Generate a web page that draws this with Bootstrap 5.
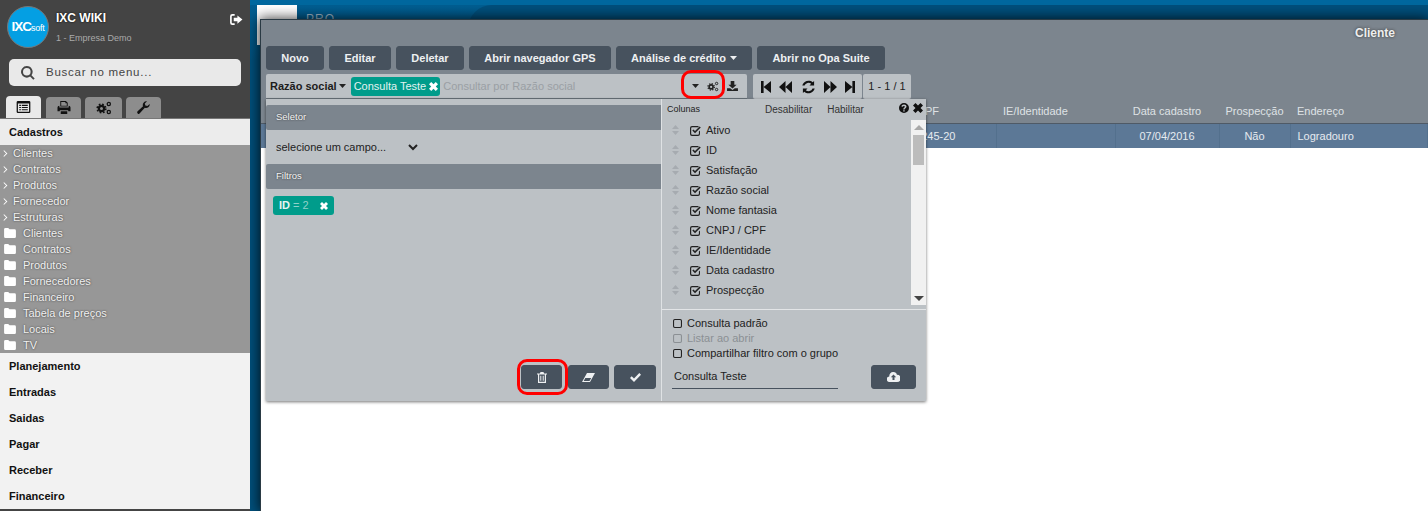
<!DOCTYPE html>
<html lang="pt-BR">
<head>
<meta charset="utf-8">
<title>IXC WIKI</title>
<link href="https://cdn.jsdelivr.net/npm/bootstrap@5.3.0/dist/css/bootstrap.min.css" rel="stylesheet">
<style>
html,body{height:511px;overflow:hidden}
body{font-family:"Liberation Sans",Arial,sans-serif;font-size:11px;background:#fff;color:#222}
.ic{display:inline-block;fill:currentColor;flex:none}
.ic-w{color:#fff}
.shell{height:511px}
.side{width:250px;flex:none;background:#444;height:511px;overflow:hidden}
.brand{height:59px;padding:6px 7px 0 7px;color:#fff}
.brand-txt{margin-left:7px}
.logo-disc{width:42px;height:42px;border-radius:50%;background:#049fe3;border:1px solid #777;color:#fff;font-weight:700;font-size:13.5px;letter-spacing:-1px;line-height:40px;text-align:center;flex:none}
.logo-disc span{font-size:9px;font-weight:400;letter-spacing:-.3px}
.brand-name{font-weight:700;font-size:12px;line-height:14px;margin-top:5px;text-shadow:0 0 2px #000}
.brand-sub{font-size:9px;color:#aaa;line-height:12px;margin-top:7px}
.search-box{margin:0 9px;height:27px;background:#e9e9e9;border-radius:5px;color:#444;font-size:11.5px;letter-spacing:.75px;padding-left:12px;gap:11px}
.side-tabs{margin:11px 0 0 6px;height:21px;gap:4px}
.side-tab{width:35px;height:21px;background:#8d8d8d;border-radius:4px 4px 0 0;color:#111}
.side-tab.on{background:#e9e9e9;height:22px;margin-top:-1px;margin-right:1px}
.side-tab.wide{width:37px}
.side-rule{height:1px;background:#777}
.menu-head{height:26px;background:#ececec;color:#111;font-weight:700;font-size:11px;padding-left:9px;line-height:26px}
.menu-alt{background:#f2f2f2}
.menu-list{background:#979797;height:208px;color:#f1f1f1;text-shadow:0 0 2px #333;padding-top:0}
.menu-list div{height:16px;line-height:16px;display:flex;align-items:center;padding-left:3px}
.menu-list .folder{padding-left:4px}
.menu-list .ic{color:#fff}
.t1{margin-left:5px}.t2{margin-left:7px}
.desk{flex:1;position:relative;height:511px;padding:19px 0 0 10px;background:linear-gradient(#00689f 0,#00689f 5px,#005e92 5px,#00507c 60px);overflow:hidden}
.behind-logo{position:absolute;left:7px;top:5px;width:40px;height:40px;background:#fff}
.behind-pro{position:absolute;left:56px;top:13px;color:#9db6c8;font-size:12px;letter-spacing:1px;line-height:12px}
.behind-wave{position:absolute;left:218px;top:5px;right:0;height:40px;border-radius:24px 0 0 0;background:#004f7c}
.win{position:relative;height:492px;background:#fff;border-top:1px solid #2a3a44;border-left:1px solid #2a3a44;box-shadow:0 0 12px 1px rgba(0,0,0,.75)}
.win-top{height:79px;background:#7c858e;position:relative}
.win-title{position:absolute;right:33px;top:7px;color:#eee;font-weight:700;font-size:12px;line-height:12px;text-shadow:0 0 3px #333}
.act-row{padding:26px 0 0 5px;gap:5px;height:50px}
.btn-ixc{--bs-btn-padding-y:0;--bs-btn-padding-x:0;--bs-btn-font-size:11px;--bs-btn-font-weight:700;--bs-btn-color:#eef0f2;--bs-btn-bg:#47525e;--bs-btn-border-color:#47525e;--bs-btn-border-radius:3px;--bs-btn-hover-bg:#47525e;--bs-btn-hover-color:#eef0f2;--bs-btn-hover-border-color:#47525e;height:24px;display:flex;align-items:center;justify-content:center}
.w58{width:58px}.w62{width:62px}.w68{width:68px}.w142{width:142px}.w136{width:136px;gap:4px}.w128{width:128px}.w41{width:41px}.w42{width:42px}.w45{width:45px}
.tool-row{padding:4px 0 0 5px;height:29px;gap:6px}
.find-bar{width:481px;height:25px;background:#bcc1c5;border-radius:2px 2px 0 0;padding-left:4px;border-bottom:1px solid #6b747c;color:#222}
.find-label{font-weight:700;font-size:11px;color:#1c1c1c;margin-right:2px}
.chip{background:#009c8b;color:#e2f3f1;border-radius:3px;height:19px;padding:0 2px 0 3px;font-size:11px;line-height:19px;gap:3px;margin-left:1px}
.find-hint{color:#9a9fa4;font-size:11px;margin-left:3px}
.find-tools{gap:8px;padding-right:9px;color:#222}
.pager{height:25px;background:#bcc1c5;width:109px;border-radius:2px;padding:0 7px 0 8px;color:#111;justify-content:space-between}
.pager-count{height:25px;background:#bcc1c5;width:48px;margin-left:-5px;border-radius:2px;text-align:center;line-height:25px;color:#222;font-size:11px}
.grid-tbl{table-layout:fixed;width:1167px;margin:0;border-collapse:collapse}
.grid-tbl th{height:24px;background:#7c858e;color:#dfe2e5;font-weight:400;font-size:11px;padding:0;border-bottom:1px solid #4f5a66;vertical-align:middle;line-height:18px}
.grid-tbl td{height:25px;background:#5c7896;color:#e6ebf0;font-size:11px;padding:0;border-right:1px solid #53708d;border-bottom:0;vertical-align:middle}
.c1{width:735px}.c2{width:119px}.c3{width:104px}.c4{width:71px}
.grid-tbl .pl7{padding-left:7px}
.grid-tbl .hcpf{padding-right:57px}
.grid-tbl .dcpf{padding-right:40px}
.drop{position:absolute;left:5px;top:79px;width:660px;height:302px;background:#bcc1c5;box-shadow:0 1px 3px rgba(0,0,0,.55)}
.drop-left{width:396px;padding-top:6px;border-right:1px solid #dfe2e4;position:relative}
.bar-head{height:25px;background:#7c858e;color:#f4f4f4;font-size:9.5px;line-height:24px;padding-left:10px;text-shadow:0 0 2px #333;border-radius:2px 0 0 2px}
.field-row{height:34px;padding-left:6px}
.field-row select{border:0;background:transparent;font-family:inherit;font-size:11px;color:#222;width:149px;outline:0}
.id-chip{display:inline-flex;align-items:center;margin:7px 0 0 7px;width:61px;height:19px;background:#009c8b;color:#e6f5f3;border-radius:3px;padding:0 6px;font-size:11px;justify-content:space-between}
.id-chip b{font-weight:700}
.id-chip em{font-style:normal;color:#8fd1c9}
.drop-acts{position:absolute;left:255px;bottom:12px}
.drop-acts .btn+.btn{margin-left:6px}
.drop-acts .btn+.btn+.btn{margin-left:5px}
.drop-right{flex:1;position:relative}
.col-head{height:21px;padding:0 0 0 5px;font-size:10px;color:#222}
.col-head .cols{font-size:9px;width:98px}
.col-head .lnk{font-size:10px;color:#333;margin-right:15px}
.col-x{position:absolute;right:3px;top:4px;gap:4px;color:#111}
.col-wrap{height:185px}
.col-list{flex:1;padding-top:0}
.col-item{height:20px;display:flex;align-items:center;font-size:11px;color:#222;padding-left:10px}
.col-item .grip{color:#a6abb0;margin-right:11px}
.col-item .chk{margin-right:5px;color:#222}
.sbar{width:15px;height:185px;background:#f1f1f1;position:relative;flex:none}
.sbar i{position:absolute;left:2px;top:15px;width:11px;height:30px;background:#bcbcbc}
.sbar u{position:absolute;left:3px;width:0;height:0;border-left:5px solid transparent;border-right:5px solid transparent}
.sbar .up{top:5px;border-bottom:5px solid #a8a8a8}
.sbar .dn{bottom:4px;border-top:5px solid #444}
.col-foot{border-top:1px solid #e3e5e7;margin-top:4px;padding:6px 0 0 11px;color:#222;font-size:11px}
.opt{height:15px;line-height:15px;display:flex;align-items:center;gap:5px}
.opt.off{color:#8b9094}
.save-row{margin-top:4px;padding-right:10px}
.save-row input{width:166px;height:24px;margin-left:-1px;border:0;border-bottom:1px solid #47525e;background:transparent;font-family:inherit;font-size:11px;color:#222;padding:0 0 2px 2px;outline:0}
.ring{position:absolute;border:3px solid #f00;border-radius:10px;pointer-events:none}
.ring-a{left:420px;top:50px;width:44px;height:29px}
.ring-b{left:256px;top:339px;width:51px;height:36px}
</style>
</head>
<body>
<svg width="0" height="0" class="position-absolute">
<defs>
<symbol id="s-list" viewBox="0 0 16 14"><path d="M1.500 0h13A1.500 1.500 0 0 1 16 1.500v11a1.500 1.500 0 0 1-1.500 1.500h-13A1.500 1.500 0 0 1 0 12.500v-11A1.500 1.500 0 0 1 1.500 0zM1.500 3v9.500h13V3zM3 4.500h2v1.300H3zM6 4.500h7v1.300H6zM3 7h2v1.300H3zM6 7h7v1.300H6zM3 9.500h2v1.300H3zM6 9.500h7v1.300H6z" fill-rule="evenodd"/></symbol>
<symbol id="s-print" viewBox="0 0 14 14"><path d="M3 0h6l2 2v4H3zM4 1v4h6V2.500H8.500V1zM0 7a2 2 0 0 1 2-2v2h10V5a2 2 0 0 1 2 2v4h-2.500v-1h-9v1H0zM3.500 11h7v3h-7z" fill-rule="evenodd"/></symbol>
<symbol id="s-cogs" viewBox="0 0 16 14"><g fill="none" stroke="currentColor"><circle cx="5.500" cy="7.500" r="2.600" stroke-width="2.200"/><circle cx="5.500" cy="7.500" r="4.300" stroke-width="1.600" stroke-dasharray="1.700 1.700"/><circle cx="12.800" cy="3" r="1.600" stroke-width="1.300"/><circle cx="12.800" cy="11" r="1.600" stroke-width="1.300"/></g></symbol>
<symbol id="s-wrench" viewBox="0 0 14 14"><path d="M13.700 3.200a4 4 0 0 1-5.300 4.200L3 13.300a1.500 1.500 0 0 1-2.300-2.200l5.800-5.400A4 4 0 0 1 10.800.3L8.400 2.700l.6 2.200 2.200.6z"/></symbol>
<symbol id="s-out" viewBox="0 0 14 12"><path d="M5 0v1.800H2.800a1 1 0 0 0-1 1v6.400a1 1 0 0 0 1 1H5V12H2.500A2.500 2.500 0 0 1 0 9.500v-7A2.500 2.500 0 0 1 2.500 0zM8 1.500 13.500 6 8 10.500V8H4V4h4z"/></symbol>
<symbol id="s-search" viewBox="0 0 14 14"><path d="M5.800 0a5.800 5.800 0 0 1 4.700 9.200l3.200 3.200-1.400 1.400-3.200-3.200A5.800 5.800 0 1 1 5.800 0zm0 2a3.800 3.800 0 1 0 0 7.600 3.800 3.800 0 0 0 0-7.600z" fill-rule="evenodd"/></symbol>
<symbol id="s-folder" viewBox="0 0 13 11"><path d="M1.500 0h3l1.500 1.500h5.500A1.500 1.500 0 0 1 13 3v6.500a1.500 1.500 0 0 1-1.500 1.500h-10A1.500 1.500 0 0 1 0 9.500v-8A1.500 1.500 0 0 1 1.500 0z"/></symbol>
<symbol id="s-angle" viewBox="0 0 6 8"><path d="M1.300 0 5.300 4l-4 4-.8-.8L3.700 4 .5.800z"/></symbol>
<symbol id="s-caret" viewBox="0 0 7 4"><path d="M0 0h7L3.500 4z"/></symbol>
<symbol id="s-x" viewBox="0 0 10 10"><path d="M2.500 0 5 2.500 7.500 0 10 2.500 7.500 5 10 7.500 7.500 10 5 7.500 2.500 10 0 7.500 2.500 5 0 2.500z"/></symbol>
<symbol id="s-dl" viewBox="0 0 12 11"><path d="M4 0h4v4h2.500L6 8.200 1.500 4H4zM0 8h3.500L6 10l2.500-2H12v3H0z"/></symbol>
<symbol id="s-first" viewBox="0 0 10 12"><path d="M0 0h2.600v12H0zM10 0v12L2.600 6z"/></symbol>
<symbol id="s-prev" viewBox="0 0 13 12"><path d="M6.500 0v12L0 6zM13 0v12L6.500 6z"/></symbol>
<symbol id="s-next" viewBox="0 0 13 12"><path d="M0 0v12l6.500-6zM6.500 0v12L13 6z"/></symbol>
<symbol id="s-last" viewBox="0 0 10 12"><path d="M10 0H7.400v12H10zM0 0v12l7.400-6z"/></symbol>
<symbol id="s-sync" viewBox="0 0 14 14"><path d="M12.600 1v4.500H8l1.700-1.700A4.200 4.200 0 0 0 3 5.500H.8A6.400 6.400 0 0 1 11.200 2.300zM1.400 13V8.500H6l-1.700 1.700A4.200 4.200 0 0 0 11 8.500h2.200A6.400 6.400 0 0 1 2.800 11.700z"/></symbol>
<symbol id="s-trash" viewBox="0 0 10 11"><path d="M3.500 0h3l.6 1.500H10v1H9V11H1V2.500H0v-1h2.900zM2.200 2.500v7.300h5.600V2.500zM3.300 3.700h1v5h-1zM5.700 3.700h1v5h-1z" fill-rule="evenodd"/></symbol>
<symbol id="s-eraser" viewBox="0 0 13 9"><path d="M5 0h8L8 9H0zM3.300 5 1.700 8h5.800l1.700-3z" fill-rule="evenodd"/></symbol>
<symbol id="s-check" viewBox="0 0 11 9"><path d="M4 9 0 5l1.700-1.700L4 5.600 9.300 0 11 1.800z"/></symbol>
<symbol id="s-cloud" viewBox="0 0 13 10"><path d="M6.500 0a3.500 3.500 0 0 1 3.400 2.700A3.200 3.200 0 0 1 10 10H2.800A2.800 2.800 0 0 1 2.300 4.400 4 4 0 0 1 6.500 0zm0 2.500L3.800 5.300h1.700V8h2V5.300h1.700z" fill-rule="evenodd"/></symbol>
<symbol id="s-q" viewBox="0 0 10 10"><path d="M5 0a5 5 0 1 1 0 10A5 5 0 0 1 5 0zM4.200 7.200v1.300h1.500V7.200zM5 1.500c-1.500 0-2.500.9-2.600 2l1.400.3c.1-.6.500-.9 1.100-.9.600 0 1 .3 1 .8 0 .9-1.700 1-1.700 2.700h1.500c0-1.100 1.800-1.300 1.800-2.900 0-1.200-1-2-2.500-2z" fill-rule="evenodd"/></symbol>
<symbol id="s-sort" viewBox="0 0 7 10"><path d="M3.500 0 7 4H0zM0 6h7l-3.500 4z"/></symbol>
<symbol id="s-chk" viewBox="0 0 11 11"><path d="M2 1h6.500v1.200H2.200a1 1 0 0 0-1 .9v5.700a1 1 0 0 0 1 1h5.700a1 1 0 0 0 1-1V6.600l1.100-1.100v3.500A2 2 0 0 1 8 11H2a2 2 0 0 1-2-2V3a2 2 0 0 1 2-2z"/><path d="M5 8.300 2.300 5.600l1.100-1.100L5 6.100 9.600 1.500l1.200 1.100z"/></symbol>
<symbol id="s-box" viewBox="0 0 10 10"><path d="M2 0h6a2 2 0 0 1 2 2v6a2 2 0 0 1-2 2H2a2 2 0 0 1-2-2V2a2 2 0 0 1 2-2zm.2 1.100a1 1 0 0 0-1 1v5.800a1 1 0 0 0 1 1h5.600a1 1 0 0 0 1-1V2.100a1 1 0 0 0-1-1z" fill-rule="evenodd"/></symbol>
</defs>
</svg>

<div class="shell d-flex">
  <aside class="side">
    <div class="brand d-flex align-items-start">
      <div class="logo-disc">IXC<span>soft</span></div>
      <div class="flex-grow-1 brand-txt">
        <div class="brand-name">IXC WIKI</div>
        <div class="brand-sub">1 - Empresa Demo</div>
      </div>
      <svg class="ic ic-w mt-2" width="13" height="11"><use href="#s-out"/></svg>
    </div>
    <div class="search-box d-flex align-items-center"><svg class="ic" width="14" height="14"><use href="#s-search"/></svg><span>Buscar no menu...</span></div>
    <div class="side-tabs d-flex">
      <div class="side-tab on d-flex align-items-center justify-content-center"><svg class="ic" width="15" height="12"><use href="#s-list"/></svg></div>
      <div class="side-tab d-flex align-items-center justify-content-center"><svg class="ic" width="14" height="13"><use href="#s-print"/></svg></div>
      <div class="side-tab wide d-flex align-items-center justify-content-center"><svg class="ic" width="16" height="14"><use href="#s-cogs"/></svg></div>
      <div class="side-tab d-flex align-items-center justify-content-center"><svg class="ic" width="13" height="13"><use href="#s-wrench"/></svg></div>
    </div>
    <div class="side-rule"></div>
    <div class="menu-head">Cadastros</div>
    <div class="menu-list">
      <div><svg class="ic" width="5" height="7"><use href="#s-angle"/></svg><span class="t1">Clientes</span></div>
      <div><svg class="ic" width="5" height="7"><use href="#s-angle"/></svg><span class="t1">Contratos</span></div>
      <div><svg class="ic" width="5" height="7"><use href="#s-angle"/></svg><span class="t1">Produtos</span></div>
      <div><svg class="ic" width="5" height="7"><use href="#s-angle"/></svg><span class="t1">Fornecedor</span></div>
      <div><svg class="ic" width="5" height="7"><use href="#s-angle"/></svg><span class="t1">Estruturas</span></div>
      <div class="folder"><svg class="ic" width="12" height="10"><use href="#s-folder"/></svg><span class="t2">Clientes</span></div>
      <div class="folder"><svg class="ic" width="12" height="10"><use href="#s-folder"/></svg><span class="t2">Contratos</span></div>
      <div class="folder"><svg class="ic" width="12" height="10"><use href="#s-folder"/></svg><span class="t2">Produtos</span></div>
      <div class="folder"><svg class="ic" width="12" height="10"><use href="#s-folder"/></svg><span class="t2">Fornecedores</span></div>
      <div class="folder"><svg class="ic" width="12" height="10"><use href="#s-folder"/></svg><span class="t2">Financeiro</span></div>
      <div class="folder"><svg class="ic" width="12" height="10"><use href="#s-folder"/></svg><span class="t2">Tabela de preços</span></div>
      <div class="folder"><svg class="ic" width="12" height="10"><use href="#s-folder"/></svg><span class="t2">Locais</span></div>
      <div class="folder"><svg class="ic" width="12" height="10"><use href="#s-folder"/></svg><span class="t2">TV</span></div>
    </div>
    <div class="menu-head menu-alt">Planejamento</div>
    <div class="menu-head menu-alt">Entradas</div>
    <div class="menu-head menu-alt">Saidas</div>
    <div class="menu-head menu-alt">Pagar</div>
    <div class="menu-head menu-alt">Receber</div>
    <div class="menu-head menu-alt">Financeiro</div>
  </aside>

  <main class="desk">
    <div class="behind-logo"></div>
    <div class="behind-pro">PRO —</div>
    <div class="behind-wave"></div>

    <section class="win">
      <div class="win-top">
        <div class="win-title">Cliente</div>
        <div class="act-row d-flex">
          <button class="btn btn-ixc w58">Novo</button>
          <button class="btn btn-ixc w62">Editar</button>
          <button class="btn btn-ixc w68">Deletar</button>
          <button class="btn btn-ixc w142">Abrir navegador GPS</button>
          <button class="btn btn-ixc w136">Análise de crédito <svg class="ic" width="7" height="4"><use href="#s-caret"/></svg></button>
          <button class="btn btn-ixc w128">Abrir no Opa Suite</button>
        </div>
        <div class="tool-row d-flex">
          <div class="find-bar d-flex align-items-center">
            <span class="find-label">Razão social</span><svg class="ic me-1" width="7" height="4"><use href="#s-caret"/></svg>
            <span class="chip d-inline-flex align-items-center">Consulta Teste <svg class="ic ic-w" width="9" height="9"><use href="#s-x"/></svg></span>
            <span class="find-hint flex-grow-1">Consultar por Razão social</span>
            <span class="find-tools d-flex align-items-center">
              <svg class="ic" width="7" height="4"><use href="#s-caret"/></svg>
              <svg class="ic" width="12" height="11"><use href="#s-cogs"/></svg>
              <svg class="ic" width="11" height="10"><use href="#s-dl"/></svg>
            </span>
          </div>
          <div class="pager d-flex align-items-center">
            <svg class="ic" width="10" height="12"><use href="#s-first"/></svg>
            <svg class="ic" width="13" height="12"><use href="#s-prev"/></svg>
            <svg class="ic" width="15" height="14"><use href="#s-sync"/></svg>
            <svg class="ic" width="13" height="12"><use href="#s-next"/></svg>
            <svg class="ic" width="10" height="12"><use href="#s-last"/></svg>
          </div>
          <div class="pager-count">1 - 1 / 1</div>
        </div>
      </div>
      <table class="table grid-tbl">
        <colgroup><col class="c1"><col class="c2"><col class="c3"><col class="c4"><col></colgroup>
        <thead><tr>
          <th class="text-end hcpf">CNPJ / CPF</th>
          <th class="pl7">IE/Identidade</th>
          <th class="text-center">Data cadastro</th>
          <th class="text-center">Prospecção</th>
          <th class="pl7">Endereço</th>
        </tr></thead>
        <tbody><tr>
          <td class="text-end dcpf">123.456.789-245-20</td>
          <td></td>
          <td class="text-center">07/04/2016</td>
          <td class="text-center">Não</td>
          <td class="pl7">Logradouro</td>
        </tr></tbody>
      </table>

      <div class="drop d-flex">
        <div class="drop-left">
          <div class="bar-head">Seletor</div>
          <div class="field-row d-flex align-items-center">
            <select aria-label="Campo"><option>selecione um campo...</option></select>
          </div>
          <div class="bar-head">Filtros</div>
          <span class="id-chip"><span><b>ID</b> <em>= 2</em></span><svg class="ic ic-w" width="8" height="8"><use href="#s-x"/></svg></span>
          <div class="drop-acts d-flex">
            <button class="btn btn-ixc w41"><svg class="ic" width="10" height="11"><use href="#s-trash"/></svg></button>
            <button class="btn btn-ixc w41"><svg class="ic" width="13" height="9"><use href="#s-eraser"/></svg></button>
            <button class="btn btn-ixc w42"><svg class="ic" width="11" height="9"><use href="#s-check"/></svg></button>
          </div>
        </div>
        <div class="drop-right">
          <div class="col-head d-flex align-items-center">
            <span class="cols">Colunas</span>
            <span class="lnk">Desabilitar</span>
            <span class="lnk">Habilitar</span>
          </div>
          <div class="col-x d-flex"><svg class="ic" width="10" height="10"><use href="#s-q"/></svg><svg class="ic" width="10" height="10"><use href="#s-x"/></svg></div>
          <div class="col-wrap d-flex">
            <div class="col-list">
              <div class="col-item"><svg class="ic grip" width="7" height="10"><use href="#s-sort"/></svg><svg class="ic chk" width="11" height="11"><use href="#s-chk"/></svg>Ativo</div>
              <div class="col-item"><svg class="ic grip" width="7" height="10"><use href="#s-sort"/></svg><svg class="ic chk" width="11" height="11"><use href="#s-chk"/></svg>ID</div>
              <div class="col-item"><svg class="ic grip" width="7" height="10"><use href="#s-sort"/></svg><svg class="ic chk" width="11" height="11"><use href="#s-chk"/></svg>Satisfação</div>
              <div class="col-item"><svg class="ic grip" width="7" height="10"><use href="#s-sort"/></svg><svg class="ic chk" width="11" height="11"><use href="#s-chk"/></svg>Razão social</div>
              <div class="col-item"><svg class="ic grip" width="7" height="10"><use href="#s-sort"/></svg><svg class="ic chk" width="11" height="11"><use href="#s-chk"/></svg>Nome fantasia</div>
              <div class="col-item"><svg class="ic grip" width="7" height="10"><use href="#s-sort"/></svg><svg class="ic chk" width="11" height="11"><use href="#s-chk"/></svg>CNPJ / CPF</div>
              <div class="col-item"><svg class="ic grip" width="7" height="10"><use href="#s-sort"/></svg><svg class="ic chk" width="11" height="11"><use href="#s-chk"/></svg>IE/Identidade</div>
              <div class="col-item"><svg class="ic grip" width="7" height="10"><use href="#s-sort"/></svg><svg class="ic chk" width="11" height="11"><use href="#s-chk"/></svg>Data cadastro</div>
              <div class="col-item"><svg class="ic grip" width="7" height="10"><use href="#s-sort"/></svg><svg class="ic chk" width="11" height="11"><use href="#s-chk"/></svg>Prospecção</div>
            </div>
            <div class="sbar"><u class="up"></u><i></i><u class="dn"></u></div>
          </div>
          <div class="col-foot">
            <div class="opt"><svg class="ic" width="9" height="9"><use href="#s-box"/></svg>Consulta padrão</div>
            <div class="opt off"><svg class="ic" width="9" height="9"><use href="#s-box"/></svg>Listar ao abrir</div>
            <div class="opt"><svg class="ic" width="9" height="9"><use href="#s-box"/></svg>Compartilhar filtro com o grupo</div>
            <div class="save-row d-flex justify-content-between align-items-center">
              <input type="text" value="Consulta Teste" aria-label="Nome">
              <button class="btn btn-ixc w45"><svg class="ic" width="13" height="10"><use href="#s-cloud"/></svg></button>
            </div>
          </div>
        </div>
      </div>
      <div class="ring ring-a"></div>
      <div class="ring ring-b"></div>
    </section>
  </main>
</div>
<script src="https://cdn.jsdelivr.net/npm/bootstrap@5.3.0/dist/js/bootstrap.bundle.min.js"></script>
</body>
</html>
